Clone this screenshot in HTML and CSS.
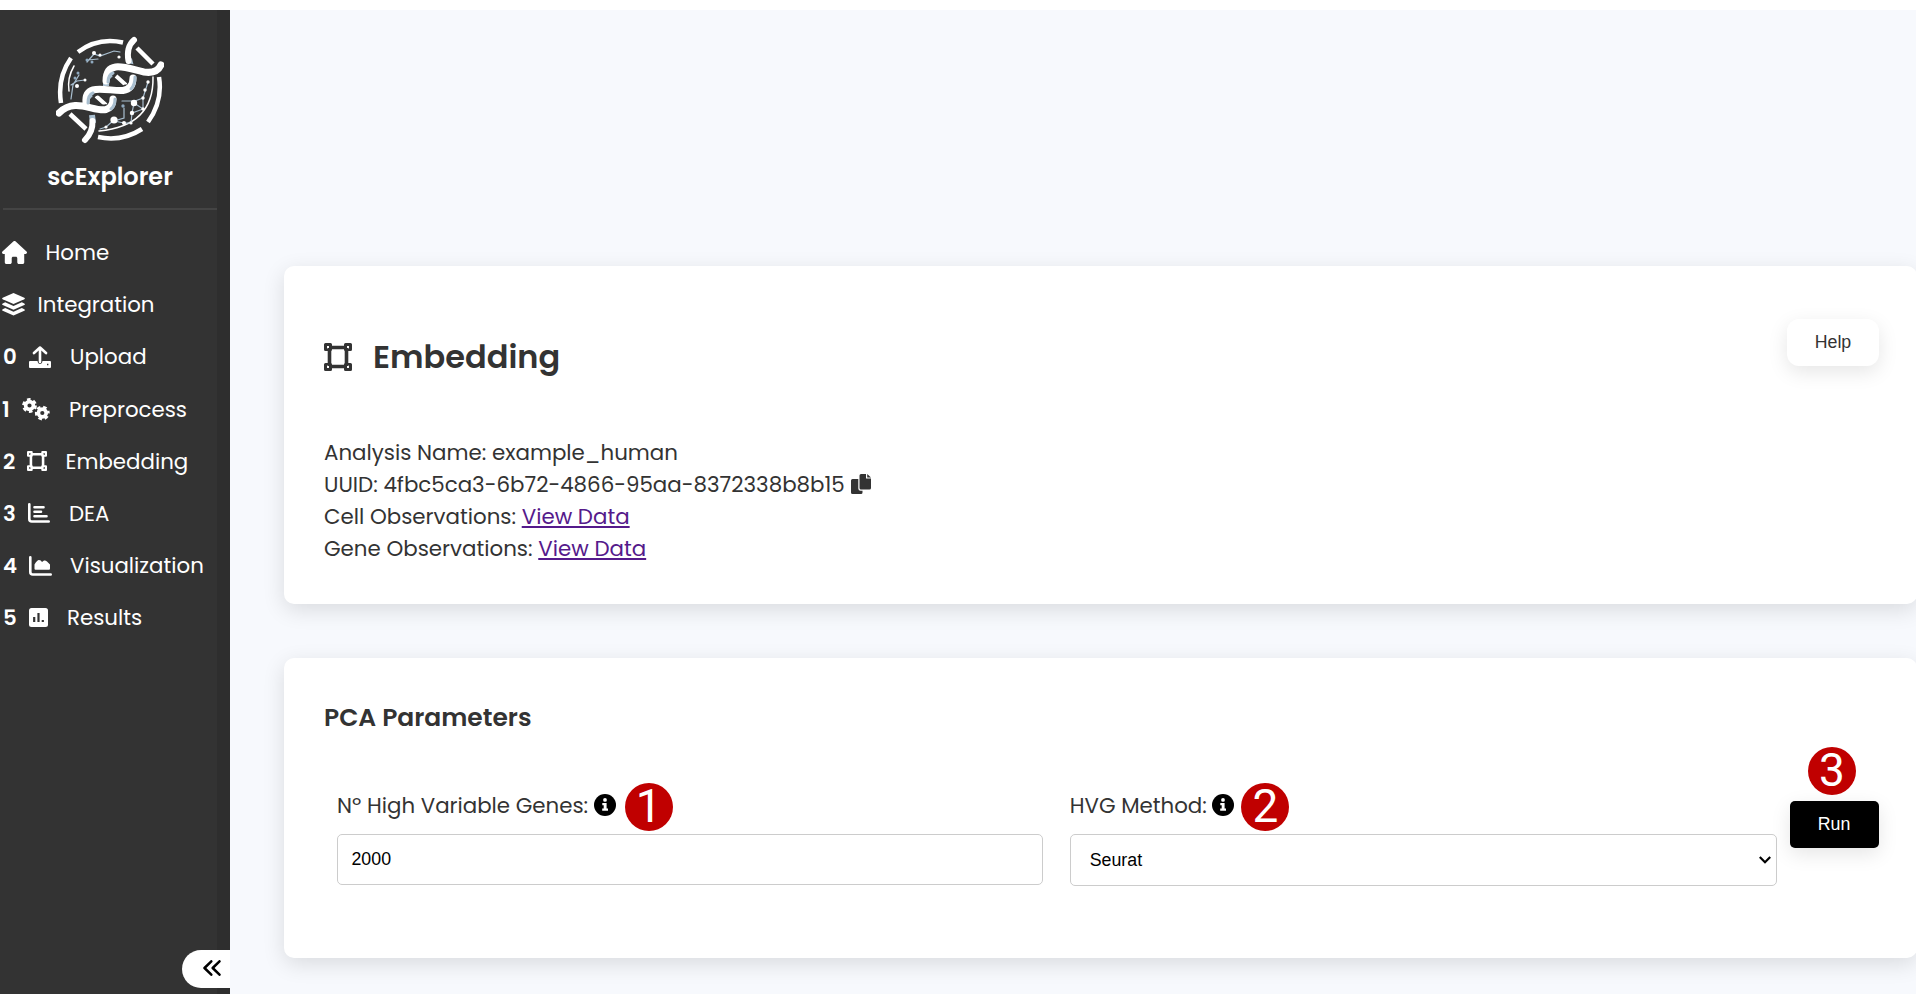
FILE: index.html
```html
<!DOCTYPE html>
<html lang="en">
<head>
<meta charset="utf-8">
<title>scExplorer</title>
<link rel="stylesheet" href="styles.css">
</head>
<body>
<svg class="defs" width="0" height="0">
  <symbol id="square" viewBox="0 0 28 28">
    <path d="M5 4.500h18M5 23.500h18M5.500 5v18M22.500 5v18" stroke="currentColor" stroke-width="3.600" fill="none"/>
    <path fill-rule="evenodd" fill="currentColor" d="M1.500 0h5Q8 0 8 1.500v5Q8 8 6.500 8h-5Q0 8 0 6.500v-5Q0 0 1.500 0zM3 3v2.500h2.500V3zM21.500 0h5Q28 0 28 1.500v5Q28 8 26.500 8h-5Q20 8 20 6.500v-5Q20 0 21.500 0zM22.500 3v2.500H25V3zM1.500 20h5Q8 20 8 21.500v5Q8 28 6.500 28h-5Q0 28 0 26.500v-5Q0 20 1.500 20zM3 22.500V25h2.500v-2.500zM21.500 20h5q1.500 0 1.500 1.500v5q0 1.500-1.500 1.500h-5q-1.500 0-1.500-1.500v-5q0-1.500 1.500-1.500zM22.500 22.500V25H25v-2.500z"/>
  </symbol>
  <symbol id="info" viewBox="0 0 22 22">
    <circle cx="11" cy="11" r="11" fill="#000"/>
    <circle cx="11" cy="5.900" r="1.900" fill="#fff"/>
    <path fill="#fff" d="M8.300 9h4.300v5.600H14v2.200H8.200v-2.200h1.500v-3.400H8.300z"/>
  </symbol>
</svg>
<div class="app">
  <aside class="sidebar">
    <div class="brand">
      <svg class="logo" viewBox="0 0 108 110" fill="none" stroke-linecap="round">
        <g stroke="#fff" stroke-width="4.500" stroke-linecap="butt">
          <path d="M22 17Q42 2 67 7.500M15 23Q1 43 5 68M103 42Q107 66 92 87M42 102Q66 107 86 94"/>
          <path d="M81 13l16 16M14 79l16 15"/>
        </g>
        <g stroke="#fff" stroke-width="1.500"><path d="M18 31Q11 43 13 56M97 42Q98 91 43 96"/></g>
        <g stroke="#a9bfd0" stroke-width="1.200"><path d="M31 27l7-8 6 2 14-5 6 1M32 25l10-1M15 64l2-14 6-10M15 50l6-4 8-1M66 66h13l8-3 5-16M68 73v10l-10 3 10 2h7l1-10 2-10 9 6V63M78 68l-2 10 11-4M44 94l6-2 8-7"/></g>
        <g fill="#fff" stroke="none"><circle cx="38" cy="18" r="2"/><circle cx="44" cy="20" r="1.600"/><circle cx="63" cy="22" r="1.600"/><circle cx="29" cy="45" r="1.500"/><circle cx="21" cy="51" r="2"/><circle cx="78" cy="68" r="3.200"/><circle cx="76" cy="78" r="2.200"/><circle cx="58" cy="85" r="3.600"/><circle cx="68" cy="88" r="2"/><circle cx="75" cy="88" r="1.600"/><circle cx="50" cy="92" r="1.600"/><circle cx="87" cy="63" r="1.700"/><circle cx="87" cy="74" r="1.700"/><circle cx="89" cy="55" r="1.700"/><circle cx="92" cy="47" r="1.700"/></g>
        <g fill="#8fa9bf" stroke="none"><circle cx="31" cy="25" r="1.500"/><circle cx="36" cy="27" r="1.500"/><circle cx="22" cy="38" r="1.500"/><circle cx="19" cy="43" r="1.500"/><circle cx="67" cy="71" r="1.700"/></g>
        <g stroke="#333" stroke-width="9"><path d="M73 31Q70 12 78 5M38 83Q38 97 29 105"/></g>
        <g stroke="#fff" stroke-width="4" stroke-linecap="butt"><path d="M60 41l10 9M40 61l10 9"/></g>
        <g stroke="#a9bfd0" stroke-width="6" stroke-linecap="butt"><path d="M50 51Q50 40 56 39M30 71Q30 60 36 59M36 80l1 8M73 24l2 8"/></g>
        <g stroke="#333" stroke-width="9" stroke-linecap="butt">
          <path d="M10 73C24 66 41 78 52 73M37 57C47 53 62 60 72 53M57 34C66 29 80 36 96 36"/>
        </g>
        <g stroke="#fff" stroke-width="7">
          <path stroke-width="6" d="M72.500 26Q70 12 78 5M36.500 86Q37 97 29 105"/>
          <path d="M3 78C19 62 37 77 50 74.500Q57 72 57 64"/>
          <path d="M30 68C28 46 54 57 67 55.500Q77 54 77 43"/>
          <path d="M50 46C50 23 73 34 88 37Q101 39 105 30"/>
        </g>
        <g stroke="#a9bfd0" stroke-width="3"><path d="M79 42Q79 50 75 54M59 64Q59 71 55 74M52 47Q52 40 57 38M32 68Q32 60 37 58"/></g>
      </svg>
      <div class="brand-name">scExplorer</div>
    </div>
    <nav class="nav">
      <a class="row home"><svg width="25" height="23" viewBox="0 0 576 512" preserveAspectRatio="none"><path fill="#fff" d="M575.800 255.500c0 18-15 32.100-32 32.100h-32l.7 160.200V472c0 22.100-17.900 40-40 40H392c-22.100 0-40-17.900-40-40V384c0-17.700-14.300-32-32-32H256c-17.700 0-32 14.300-32 32v88c0 22.100-17.900 40-40 40H104c-22.100 0-40-17.900-40-40V287.600H32c-18 0-32-14-32-32.100c0-9 3-17 10-24L266.400 8c7-7 15-8 22-8s15 2 21 7L564.800 231.500c8 7 12 15 11 24z"/></svg><span>Home</span></a>
      <a class="row integration"><svg width="23" height="23" viewBox="0 0 23 23" fill="#fff"><path d="M11.500 0L22.300 4.700q1.200.8 0 1.600L11.500 11 .7 6.300q-1.200-.8 0-1.600z"/><path d="M.7 10.400L3.200 9.300l8.300 3.700 8.300-3.700 2.500 1.100q1.200.8 0 1.600L11.500 16.700.7 12q-1.200-.8 0-1.600z"/><path d="M.7 16.200l2.500-1.100 8.300 3.700 8.300-3.700 2.500 1.100q1.200.8 0 1.600L11.500 22.500.7 17.800q-1.200-.8 0-1.600z"/></svg><span>Integration</span></a>
      <a class="row upload"><b>0</b><svg width="22" height="22" viewBox="0 0 22 22"><path d="M5 7l6-5.500L17 7M11 2v14" fill="none" stroke="#fff" stroke-width="2.600" stroke-linecap="round" stroke-linejoin="round"/><path fill="#fff" fill-rule="evenodd" d="M1 15h7.500q.5 3 2.500 3t2.500-3H21q1 0 1 1v5q0 1-1 1H1q-1 0-1-1v-5q0-1 1-1zM18 17.800v1.400h1.400v-1.400z"/></svg><span>Upload</span></a>
      <a class="row preprocess"><b>1</b><svg width="28" height="23" viewBox="0 0 28 23" fill="none" stroke="#fff"><circle cx="7.500" cy="7.500" r="3.900" stroke-width="3.600"/><circle cx="7.500" cy="7.500" r="6" stroke-width="2.800" stroke-dasharray="3.500 2.783"/><circle cx="20.300" cy="15" r="3.900" stroke-width="3.600"/><circle cx="20.300" cy="15" r="6" stroke-width="2.800" stroke-dasharray="3.500 2.783" stroke-dashoffset="3"/></svg><span>Preprocess</span></a>
      <a class="row embedding"><b>2</b><svg width="20" height="20"><use href="#square"/></svg><span>Embedding</span></a>
      <a class="row dea"><b>3</b><svg width="22" height="20" viewBox="0 0 22 20" fill="none" stroke="#fff" stroke-width="2.600" stroke-linecap="round"><path d="M1.300 1.300V16q0 2.500 2.500 2.500h16.900M6.500 4.200h9M6.500 8.800h6.500M6.500 13.200h12"/></svg><span>DEA</span></a>
      <a class="row visualization"><b>4</b><svg width="23" height="20" viewBox="0 0 23 20"><path d="M1.300 1.300V16q0 2.500 2.500 2.500h17.900" fill="none" stroke="#fff" stroke-width="2.600" stroke-linecap="round"/><path fill="#fff" d="M5.500 13.700V8.500Q8 4 10 4t3 2l2-1.500q1.500-.5 3 1l3 3v4q0 1.200-1 1.200H6.500q-1 0-1-1z"/></svg><span>Visualization</span></a>
      <a class="row results"><b>5</b><svg width="19" height="19" viewBox="0 0 19 19"><rect width="19" height="19" rx="2.500" fill="#fff"/><path d="M5.200 9v5M9.500 5v9M13.800 12v2" stroke="#333" stroke-width="2.200"/></svg><span>Results</span></a>
    </nav>
    <button class="collapse"><svg width="18" height="16" viewBox="0 0 18 16" fill="none" stroke="#000" stroke-width="2.500" stroke-linecap="round" stroke-linejoin="round"><path d="M8.300 1.300L1.500 8l6.800 6.700M16.500 1.300L9.700 8l6.800 6.700"/></svg></button>
  </aside>
  <main class="main">
    <section class="card intro">
      <div class="card-head">
        <h1><svg width="28" height="28"><use href="#square"/></svg><span>Embedding</span></h1>
        <button class="help">Help</button>
      </div>
      <div class="details">
        <p>Analysis Name: example_human</p>
        <p>UUID: 4fbc5ca3-6b72-4866-95aa-8372338b8b15<svg class="copy" width="20" height="20" viewBox="0 0 20 20" fill="#333"><path d="M10 0H15v4.500h5v9.500Q20 15.500 18.500 15.500H10Q8.500 15.500 8.500 14V1.500Q8.500 0 10 0zM16.200 0L20 3.500h-3.800z"/><path d="M1.500 5H7.300v9.500q0 2.200 2.200 2.200H11.500v1.800q0 1.500-1.500 1.500H1.500Q0 20 0 18.500v-12Q0 5 1.500 5z"/></svg></p>
        <p>Cell Observations: <a class="link">View Data</a></p>
        <p>Gene Observations: <a class="link">View Data</a></p>
      </div>
    </section>
    <section class="card params">
      <h2>PCA Parameters</h2>
      <div class="form">
        <div class="field">
          <div class="label"><span>Nº High Variable Genes:</span><svg width="22" height="22"><use href="#info"/></svg><span class="badge">1</span></div>
          <div class="control">2000</div>
        </div>
        <div class="field method">
          <div class="label"><span>HVG Method:</span><svg width="22" height="22"><use href="#info"/></svg><span class="badge">2</span></div>
          <div class="control select"><span>Seurat</span><svg width="12" height="8" viewBox="0 0 12 8" fill="none" stroke="#000" stroke-width="2.200"><path d="M.8 1L6 6.200 11.200 1"/></svg></div>
        </div>
        <div class="action"><span class="badge">3</span><button class="run">Run</button></div>
      </div>
    </section>
  </main>
</div>
</body>
</html>
```
FILE: styles.css
```css
* { box-sizing: border-box; }
body { margin: 0; padding: 10px 0 4px; height: 998px; overflow: hidden; background: #fff; color: #333; font-family: Poppins, Inter, sans-serif; }
.defs { position: absolute; }
svg { display: block; flex: none; }
button { border: 0; padding: 0; font: 17.78px "Liberation Sans", Arial, sans-serif; }
.app { display: flex; height: 984px; background: #f7f9fd; }
.sidebar { position: relative; width: 230px; flex: none; background: #333; border-right: 13px solid #2e2e2e; color: #fff; }
.brand { height: 200px; margin-left: 3px; padding-top: 25px; border-bottom: 2px solid #444; display: flex; flex-direction: column; align-items: center; }
.logo { width: 108px; height: 110px; }
.brand-name { margin-top: 16px; height: 32px; line-height: 32px; font-size: 24px; font-weight: 600; }
.nav { padding-top: 16.4px; }
.row { display: grid; align-items: center; height: 52.2px; font-size: 21.33px; white-space: nowrap; }
.row b { font-weight: 600; }
.home { grid-template-columns: 43.5px 1fr; padding-left: 2px; }
.integration { grid-template-columns: 35.5px 1fr; padding-left: 2px; }
.upload { grid-template-columns: 26px 41px 1fr; padding-left: 3px; }
.preprocess { grid-template-columns: 20px 47px 1fr; padding-left: 2px; }
.embedding { grid-template-columns: 24px 38.5px 1fr; padding-left: 3px; }
.dea { grid-template-columns: 25px 41px 1fr; padding-left: 3px; }
.visualization { grid-template-columns: 26px 41px 1fr; padding-left: 3px; }
.results { grid-template-columns: 26px 38px 1fr; padding-left: 3px; }
.collapse { position: absolute; right: -13px; bottom: 6px; width: 48px; height: 38px; border-radius: 19px 0 0 19px; background: #fff; display: flex; align-items: center; padding: 0 0 2px 21px; }
.main { flex: 1; min-width: 0; padding: 256px 0 0 53.7px; display: flex; flex-direction: column; gap: 54px; }
.card { width: 1633.3px; flex: none; background: #fff; border-radius: 10px; box-shadow: 0 6px 22px rgba(0, 0, 0, .12); padding: 0 38px 0 40.3px; }
.intro { height: 337.5px; }
.card-head { display: flex; justify-content: space-between; padding-top: 53px; }
h1 { margin: 23px 0 0; height: 29px; display: flex; align-items: center; gap: 21px; font-size: 32px; font-weight: 600; }
.help { width: 92px; height: 47px; border-radius: 12px; background: #fff; color: #333; box-shadow: 0 6px 20px rgba(0, 0, 0, .1); padding-bottom: 1px; }
.details { padding-top: 65.6px; }
.details p { margin: 0; height: 32.2px; line-height: 32.2px; font-size: 21.36px; white-space: nowrap; }
.copy { display: inline-block; margin-left: 6px; vertical-align: -2px; }
.link { color: #551a8b; text-decoration: underline; }
.params { height: 300px; }
h2 { margin: 0; padding-top: 44px; height: 76px; line-height: 32px; font-size: 24.96px; font-weight: 600; }
.form { display: flex; padding-left: 13px; }
.field { width: 706px; padding-top: 49px; }
.method { margin-left: 27px; width: 707px; }
.label { display: flex; align-items: center; height: 48px; font-size: 21.33px; white-space: nowrap; }
.label > span:first-child { margin-top: -3px; }
.label svg { margin-left: 5.5px; margin-top: -4px; }
.label .badge { margin-left: 9px; }
.method .label .badge { margin-left: 7px; }
.badge { width: 48px; height: 48px; border-radius: 50%; background: #c00000; color: #fff; font: 46px/46px Roboto, sans-serif; text-align: center; flex: none; }
.control { margin-top: 3px; height: 51px; border: 1.5px solid #ccc; border-radius: 5px; padding: 1px 0 0 13.5px; display: flex; align-items: center; color: #000; font: 17.78px "Liberation Sans", sans-serif; }
.select { height: 52px; padding: 1px 5px 0 19px; justify-content: space-between; }
.action { margin-left: 12.5px; width: 90px; padding-top: 13.5px; display: flex; flex-direction: column; align-items: center; }
.action .badge { margin-right: 4px; }
.run { margin-top: 6px; width: 89px; height: 47px; border-radius: 5px; background: #000; color: #fff; padding-bottom: 1px; box-shadow: 0 6px 20px rgba(0, 0, 0, .1); }
```
